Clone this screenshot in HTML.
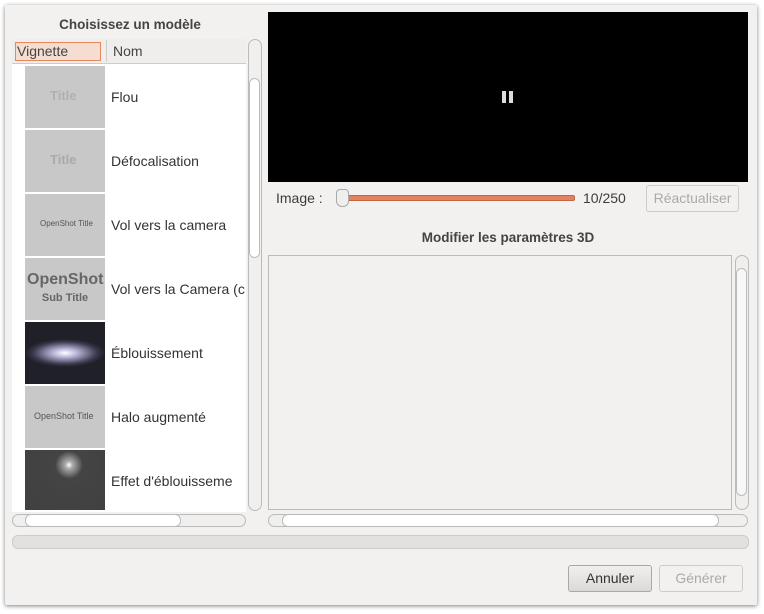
<!DOCTYPE html><html><head><style>
body{margin:0;width:764px;height:614px;background:#fff;font-family:"Liberation Sans",sans-serif;position:relative;overflow:hidden}
.a{position:absolute}
#win{left:5px;top:5px;width:752px;height:600px;background:#f2f1f0;box-shadow:0 1px 4px rgba(0,0,0,.5);border-radius:2px}
.t{font-size:14px;color:#3c3c3c}
.th{background:#c8c8c8;width:80px;height:62px;left:25px}
.nm{left:111px;font-size:14px;color:#333}
.sb{border:1px solid #bbb;background:#f0efee;border-radius:7px}
.btn{border:1px solid #a8a8a8;border-radius:3px;font-size:14px;text-align:center;line-height:25px;height:25px}
</style></head><body>
<div id="win" class="a"></div>
<div class="a t" style="left:12px;top:17px;width:236px;text-align:center;font-weight:bold;color:#444;font-size:13.5px">Choisissez un modèle</div>
<div class="a" style="left:12px;top:39px;width:234px;height:473px;background:#fff"></div>
<div class="a" style="left:12px;top:39px;width:234px;height:24px;background:#efeeed;border-bottom:1px solid #ccc"></div>
<div class="a" style="left:15px;top:42px;width:84px;height:17px;border:1px solid #e8875e;background:#f6ddd2"></div>
<div class="a t" style="left:17px;top:43px;color:#444">Vignette</div>
<div class="a" style="left:106px;top:40px;width:1px;height:22px;background:#ccc"></div>
<div class="a t" style="left:113px;top:43px;color:#444">Nom</div>
<div class="a th" style="top:66px"></div><div class="a nm" style="top:89px">Flou</div>
<div class="a th" style="top:130px"></div><div class="a nm" style="top:153px">Défocalisation</div>
<div class="a th" style="top:194px"></div><div class="a nm" style="top:217px">Vol vers la camera</div>
<div class="a th" style="top:258px"></div><div class="a nm" style="top:281px;width:135px;overflow:hidden;white-space:nowrap">Vol vers la Camera (c</div>
<div class="a th" style="top:322px;background:radial-gradient(ellipse 40px 14px at 50% 50%,#fff 0,#b8b6d8 30%,#3a384c 80%,#202028 100%)"></div><div class="a nm" style="top:345px">Éblouissement</div>
<div class="a th" style="top:386px"></div><div class="a nm" style="top:409px">Halo augmenté</div>
<div class="a th" style="top:450px;height:60px;background:radial-gradient(circle at 55% 25%,#fff 0,#aaa 6%,#444 22%,#404040 100%)"></div><div class="a nm" style="top:473px;width:135px;overflow:hidden;white-space:nowrap">Effet d'éblouisseme</div>
<div class="a" style="top:88px;font-size:13px;color:#b0b0b0;font-weight:bold;left:50px">Title</div>
<div class="a" style="left:50px;top:152px;font-size:13px;color:#aaa;font-weight:bold">Title</div>
<div class="a" style="left:40px;top:219px;font-size:8px;color:#555">OpenShot Title</div>
<div class="a" style="left:27px;top:271px;font-size:16px;color:#666;font-weight:bold;line-height:17px;text-align:center;width:76px">OpenShot<br><span style="font-size:11px">Sub Title</span></div>
<div class="a" style="left:34px;top:411px;font-size:9px;color:#555">OpenShot Title</div>
<div class="a sb" style="left:248px;top:39px;width:12px;height:470px"></div>
<div class="a" style="left:249px;top:78px;width:11px;height:180px;background:#fff;border:1px solid #bbb;border-radius:6px;box-sizing:border-box"></div>
<div class="a sb" style="left:12px;top:514px;width:232px;height:11px"></div>
<div class="a" style="left:25px;top:514px;width:156px;height:13px;background:#fff;border:1px solid #bbb;border-radius:6px;box-sizing:border-box"></div>
<div class="a" style="left:268px;top:12px;width:480px;height:170px;background:#000"></div>
<div class="a" style="left:502px;top:91px;width:4px;height:12px;background:#ddd"></div>
<div class="a" style="left:509px;top:91px;width:4px;height:12px;background:#ddd"></div>
<div class="a t" style="left:276px;top:190px">Image :</div>
<div class="a" style="left:342px;top:195px;width:231px;height:4px;background:#e3825d;border:1px solid #c06545;border-radius:2px"></div>
<div class="a" style="left:336px;top:189px;width:11px;height:16px;background:#efefef;border:1px solid #aaa;border-radius:4px 4px 6px 6px"></div>
<div class="a t" style="left:583px;top:190px">10/250</div>
<div class="a btn" style="left:646px;top:185px;width:91px;height:25px;color:#aaa;border-color:#ccc;line-height:25px">Réactualiser</div>
<div class="a t" style="left:268px;top:230px;width:480px;text-align:center;font-weight:bold;color:#444;font-size:13.5px">Modifier les paramètres 3D</div>
<div class="a" style="left:268px;top:255px;width:464px;height:255px;border:1px solid #bbb;box-sizing:border-box;background:#f2f1f0"></div>
<div class="a sb" style="left:735px;top:255px;width:12px;height:253px"></div>
<div class="a" style="left:736px;top:268px;width:11px;height:228px;background:#f7f7f7;border:1px solid #bbb;border-radius:6px;box-sizing:border-box"></div>
<div class="a sb" style="left:268px;top:514px;width:478px;height:11px"></div>
<div class="a" style="left:282px;top:514px;width:437px;height:13px;background:#fff;border:1px solid #bbb;border-radius:6px;box-sizing:border-box"></div>
<div class="a" style="left:12px;top:535px;width:735px;height:12px;background:#e2e1e0;border:1px solid #ccc;border-radius:6px"></div>
<div class="a btn" style="left:568px;top:565px;width:82px;color:#333;background:linear-gradient(#f0efee,#dcdad8)">Annuler</div>
<div class="a btn" style="left:659px;top:565px;width:82px;color:#aaa;border-color:#ccc">Générer</div>
</body></html>
